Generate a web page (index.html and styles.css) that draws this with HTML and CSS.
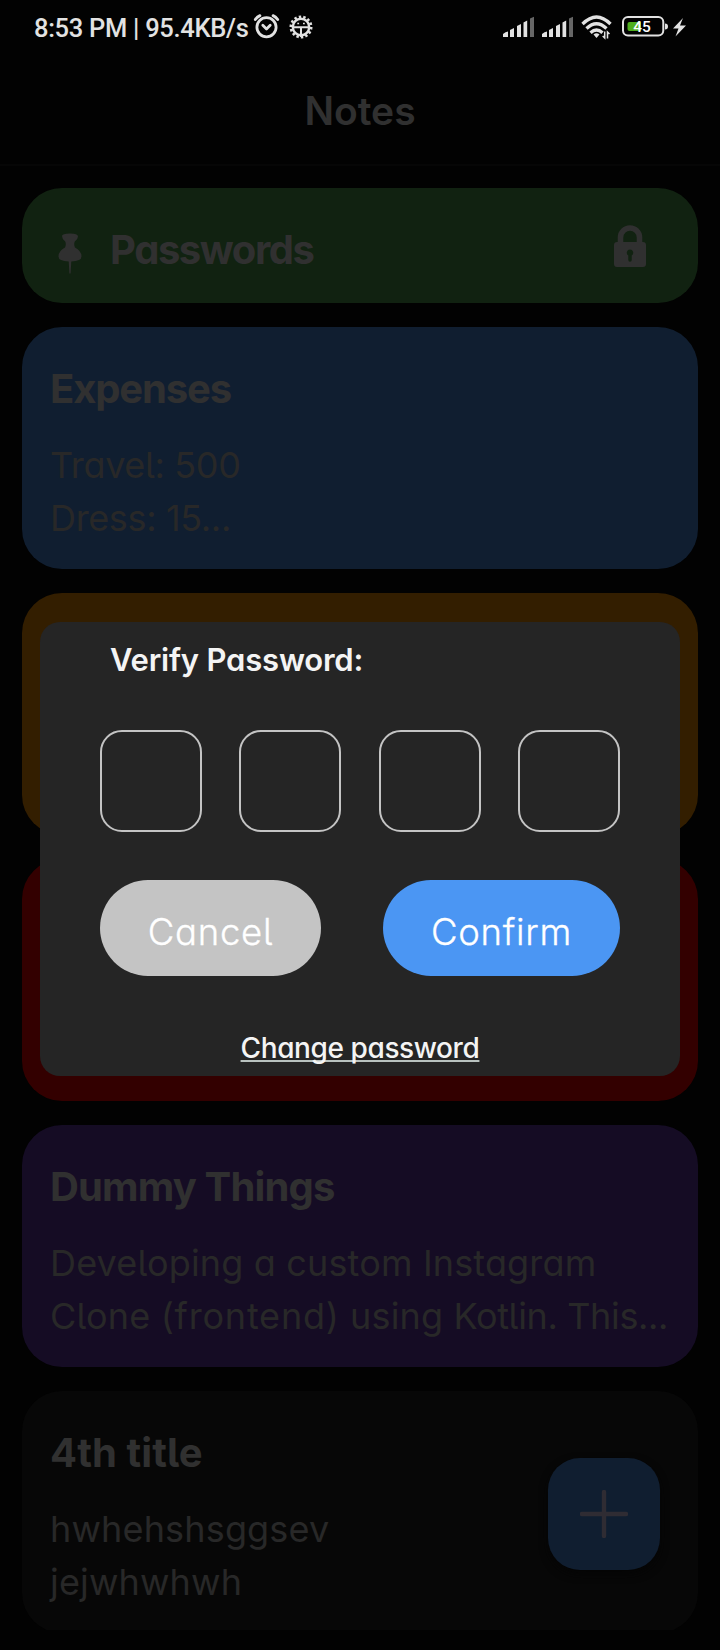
FILE: index.html
```html
<!DOCTYPE html>
<html lang="en">
<head>
<meta charset="utf-8">
<title>Notes</title>
<link rel="stylesheet" href="styles.css">
</head>
<body>
<div class="screen">
  <div class="status">
    <div class="status-side">
      <span class="clock">8:53 PM | 95.4KB/s</span>
      <svg width="32" height="54" viewBox="252 0 32 54" fill="none" stroke="#e2e2e2" stroke-width="2.8" stroke-linecap="round"><circle cx="266.5" cy="27.3" r="9.6"/><path d="M262.8 25.3l3.7 3.600 3.700-3.600" stroke-linejoin="round"/><path d="M255.300 19.600q1.800-2.800 4.600-4M277.700 19.600q-1.800-2.800-4.600-4"/></svg>
      <svg width="34" height="54" viewBox="284 0 34 54" fill="none" stroke="#e2e2e2"><circle cx="301" cy="27" r="8.200" stroke-width="2.400"/><circle cx="301" cy="27" r="10.200" stroke-width="2.600" pathLength="42" stroke-dasharray="1.600 1.400"/><path d="M293 27.200h16M301 27v10" stroke-width="2"/><path d="M297.300 23.500h1.800M303 23.500h1.800" stroke-width="1.400"/></svg>
    </div>
    <div class="status-side">
      <svg width="39" height="54" viewBox="502 0 39 54" fill="#e2e2e2"><path d="M503 37v-3q2.500-2.500 5-2.500V37zM510 37v-7l4-2v9zM517 37V26l4-2v13zM523.500 37V22.500l3.700-2V37z"/><path fill="#666" d="M530 37V18.500l4-1.700V37z"/></svg>
      <svg width="39" height="54" viewBox="541 0 39 54" fill="#e2e2e2"><path d="M542 37v-3q2.500-2.500 5-2.500V37zM549 37v-7l4-2v9zM556 37V26l4-2v13zM562.500 37V22.500l3.700-2V37z"/><path fill="#666" d="M569 37V18.500l4-1.700V37z"/></svg>
      <svg width="40" height="54" viewBox="580 0 40 54" fill="none" stroke="#e2e2e2" stroke-width="3.300"><path d="M582.500 24Q596.500 10 610.500 24M586.500 28.500q10-9.600 20 0M590.500 32.700q6-5.600 12 0"/><path fill="#e2e2e2" stroke="none" d="M593.500 34.500q3-2.300 6 0l-3 3.500z"/><path stroke-width="1.500" d="M604.700 31.500v6.500l-2-2M607.500 38.500V32l2 2"/></svg>
      <svg width="50" height="54" viewBox="620 0 50 54"><rect x="623" y="17" width="40.300" height="18.600" rx="5" fill="none" stroke="#e2e2e2" stroke-width="2"/><path d="M665 23.500q3 0 3 3t-3 3z" fill="#e2e2e2"/><path d="M629.500 22H641v9h-11.500q-2 0-2-2v-5q0-2 2-2z" fill="#4fae1e"/><text class="charge" x="642" y="32.200">45</text></svg>
      <svg width="20" height="54" viewBox="670 0 20 54" fill="#e2e2e2"><path d="M683 18l-10 10.500h5.500L675.500 36.500l10.500-11h-6z"/></svg>
    </div>
  </div>
  <header class="header"><h1 class="heading">Notes</h1></header>
  <main class="list">
    <article class="card green">
      <svg class="pin" width="24" height="42" viewBox="0 0 24 42"><path d="M4 3Q4 .5 12 .5T20 3.500Q20 6 16.800 8.500Q15.500 11 17 14.500Q23.500 18 23.500 23.500Q23.500 28 13.300 28.500L12.600 40.500H11.400L10.700 28.500Q.5 28 .5 23.500Q.5 18 7 14.500Q8.500 11 7.200 8.500Q4 6 4 3z" fill="#303030"/></svg>
      <h2 class="title tight">Passwords</h2>
      <svg class="lock" width="32" height="42" viewBox="0 0 32 42"><path d="M6.500 19V12.500a9.500 9.500 0 0 1 19 0V19" fill="none" stroke="#303030" stroke-width="5.600"/><path fill-rule="evenodd" fill="#303030" d="M3 17H29Q32 17 32 20V39Q32 42 29 42H3Q0 42 0 39V20Q0 17 3 17zM16 24.500a3.200 3.200 0 0 0-1.700 5.900V35q0 1.800 1.700 1.800t1.700-1.800v-4.600A3.200 3.200 0 0 0 16 24.500z"/></svg>
    </article>
    <article class="card blue">
      <h2 class="title snugger">Expenses</h2>
      <p class="body"><span class="snug">Travel: 500</span><br><span class="snug">Dress: 15...</span></p>
    </article>
    <article class="card orange"></article>
    <article class="card red"></article>
    <article class="card purple">
      <h2 class="title">Dummy Things</h2>
      <p class="body">Developing a custom Instagram<br>Clone <span class="wide">(frontend)</span> using <span class="snug">Kotlin. This...</span></p>
    </article>
    <article class="card plain">
      <h2 class="title loose">4th title</h2>
      <p class="body">hwhehshsggsev<br>jejwhwhwh</p>
    </article>
  </main>
  <button class="fab" aria-label="Add"><svg width="48" height="48" viewBox="0 0 48 48"><path d="M24 2v44M2 24h44" stroke="#2f2c33" stroke-width="4.400" stroke-linecap="round"/></svg></button>
  <section class="dialog">
    <h2 class="prompt">Verify Password:</h2>
    <div class="digits"><span class="digit"></span><span class="digit"></span><span class="digit"></span><span class="digit"></span></div>
    <div class="actions">
      <button class="action cancel">Cancel</button>
      <button class="action confirm">Confirm</button>
    </div>
    <a class="change">Change password</a>
  </section>
</div>
</body>
</html>
```
FILE: styles.css
```css
* { box-sizing: border-box; }
body { margin: 0; background: #020202; }
h1, h2, p { margin: 0; font-weight: inherit; }
button { border: 0; padding: 0; font: inherit; }
svg { display: block; flex: none; }
.screen {
  position: relative;
  width: 720px;
  height: 1650px;
  overflow: hidden;
  background: #020202;
  font-family: Inter, "Noto Sans", sans-serif;
  font-feature-settings: "cv11", "cv05";
  white-space: nowrap;
}
.status { display: flex; justify-content: space-between; height: 54px; padding: 0 30px 0 34px; }
.status-side { display: flex; }
.clock { width: 218px; font: 500 25.5px/56px Roboto, sans-serif; letter-spacing: -0.3px; color: #e2e2e2; }
.charge { font: 500 15.5px Roboto, sans-serif; fill: #fff; text-anchor: middle; }
.header { height: 112px; border-bottom: 2px solid #060606; text-align: center; }
.heading { font-size: 39px; line-height: 113px; font-weight: 600; letter-spacing: 0; color: #303030; }
.list { display: flex; flex-direction: column; gap: 24px; height: 1464px; padding: 22px 22px 0; overflow: hidden; }
.card { flex: none; height: 242px; padding: 32px 28px 24px; border-radius: 40px; }
.green { display: flex; height: 115px; background: #112211; }
.blue { background: #101e30; }
.orange { background: #331e00; }
.red { background: #330000; }
.purple { background: #150c24; }
.plain { background: #070707; }
.title { height: 58px; font-size: 40px; line-height: 60px; font-weight: 700; letter-spacing: -0.85px; color: #303030; }
.title.tight { letter-spacing: -1.45px; }
.title.snugger { letter-spacing: -1.15px; }
.title.loose { letter-spacing: 0.1px; }
.body { margin-top: 22px; font-size: 36px; line-height: 53px; letter-spacing: 0.16px; color: #282828; }
.snug { letter-spacing: -0.35px; }
.wide { letter-spacing: 0.8px; }
.pin { margin: 13px 28px 0 8px; }
.lock { margin: 5px 24px 0 auto; }
.fab {
  position: absolute;
  left: 548px;
  top: 1458px;
  display: grid;
  place-items: center;
  width: 112px;
  height: 112px;
  border-radius: 32px;
  background: #101e30;
  box-shadow: 0 4px 8px #050505;
}
.dialog {
  position: absolute;
  left: 40px;
  top: 622px;
  display: flex;
  flex-direction: column;
  width: 640px;
  height: 454px;
  padding: 18px 60px 0;
  border-radius: 20px;
  background: #252525;
}
.prompt { padding-left: 10px; font-size: 31px; line-height: 39px; height: 40px; font-weight: 600; letter-spacing: -0.2px; color: #f4f4f4; }
.digits { display: flex; justify-content: space-between; margin-top: 50px; }
.digit { width: 102px; height: 102px; border: 2px solid #c4c4c4; border-radius: 22px; }
.actions { display: flex; justify-content: space-between; margin-top: 48px; }
.action { height: 96px; border-radius: 48px; color: #fff; font-size: 36.5px; line-height: 104px; font-weight: 300; letter-spacing: 0.7px; -webkit-text-stroke: 0.3px #fff; }
.cancel { width: 221px; background: #c4c4c4; }
.confirm { width: 237px; background: #4b96f3; }
.change { align-self: center; margin-top: 52px; font-size: 28px; line-height: 40px; font-weight: 500; letter-spacing: -0.4px; color: #f4f4f4; text-decoration: underline 2px #b9c2bf; text-underline-offset: 2px; text-decoration-skip-ink: none; }
```
